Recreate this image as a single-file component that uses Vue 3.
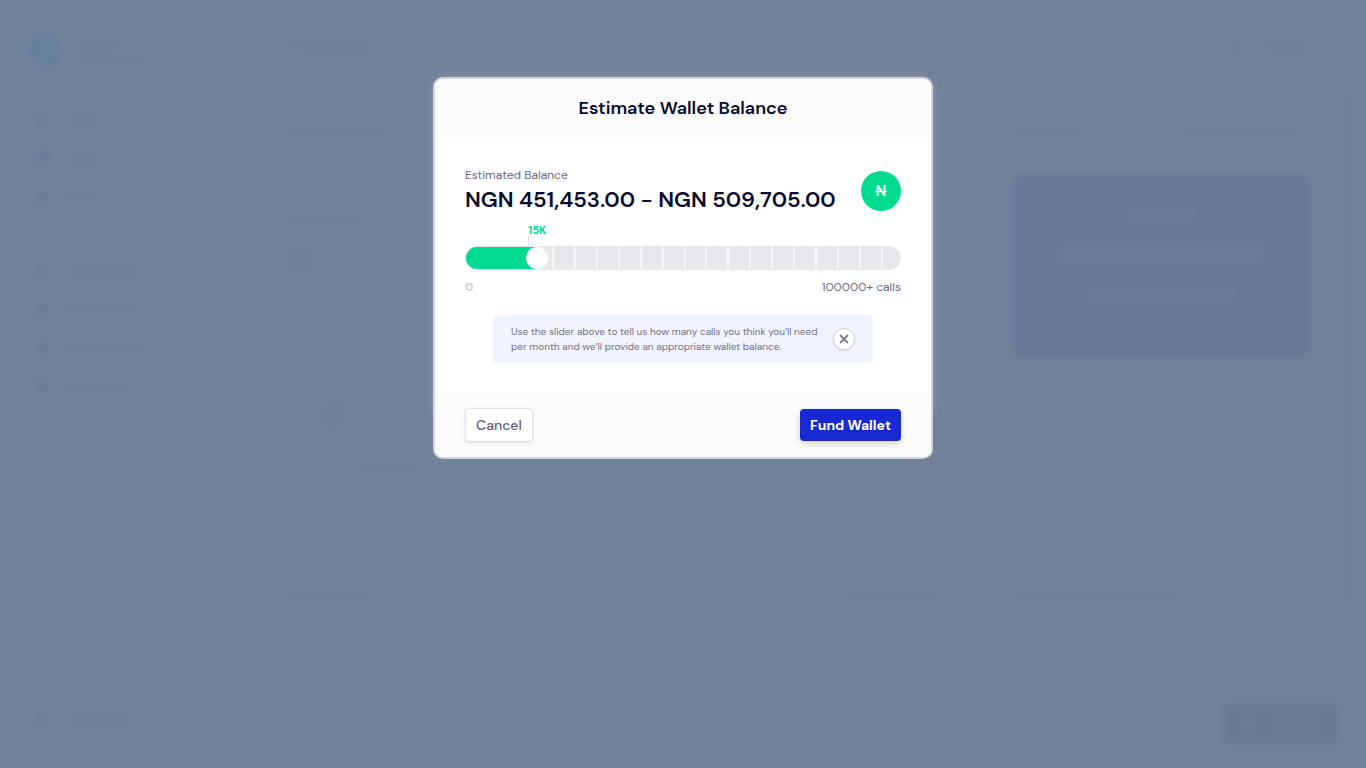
<script setup>
import { computed, ref } from 'vue'

const maxCalls = 100000
const calls = ref(14600)
const hintVisible = ref(true)

const ratio = computed(() => calls.value / maxCalls)
const callsLabel = computed(() => `${Math.round(calls.value / 1000)}K`)
const fillStyle = computed(() => ({
  width: `calc((100% - 22px) * ${ratio.value} + 11px)`,
}))
const markerStyle = computed(() => ({
  left: `calc((100% - 22px) * ${ratio.value} + 2px)`,
}))
</script>

<template>
  <div class="page">
    <div class="backdrop" aria-hidden="true">
      <div class="sidebar">
        <div class="profile">
          <i class="avatar"></i>
          <div class="profile-lines"><i class="bar w40"></i><i class="bar thin w70"></i></div>
        </div>
        <div class="nav">
          <div class="nav-row"><i class="dot"></i><i class="bar w40"></i></div>
          <div class="nav-row"><i class="dot active"></i><i class="bar w40"></i></div>
          <div class="nav-row"><i class="dot"></i><i class="bar w40"></i></div>
        </div>
        <div class="nav second">
          <i class="bar thin w50"></i>
          <div class="nav-row"><i class="dot"></i><i class="bar w80"></i></div>
          <div class="nav-row"><i class="dot"></i><i class="bar w80"></i></div>
          <div class="nav-row"><i class="dot"></i><i class="bar w80"></i></div>
          <div class="nav-row"><i class="dot"></i><i class="bar w70"></i></div>
        </div>
        <div class="nav-row last"><i class="dot"></i><i class="bar w70"></i></div>
      </div>

      <div class="main">
        <div class="row"><i class="bar w90"></i><i class="dot small end"></i><i class="bar w50"></i></div>
        <div class="columns">
          <div class="column">
            <i class="bar w100"></i>
            <div class="steps">
              <i class="bar w80"></i>
              <i class="ring"></i>
              <i class="bar thin w70 indent"></i>
              <i class="bar thin w70 indent far"></i>
              <i class="ring indent"></i>
              <i class="bar thin w70 deep"></i>
            </div>
            <div class="row bottom"><i class="bar w90"></i><i class="bar faint w100 end"></i></div>
          </div>
          <div class="column wallet">
            <div class="row inset"><i class="bar w70"></i><i class="bar w120 end"></i></div>
            <div class="balance">
              <i class="bar light w80"></i>
              <i class="bar bright w210"></i>
              <i class="bar light w160"></i>
            </div>
            <div class="row bottom"><i class="bar w170"></i></div>
          </div>
        </div>
      </div>
      <div class="scroll"></div>
      <div class="chat"><i class="dot pale"></i><i class="bar light w50"></i></div>
    </div>

    <div class="dialog" role="dialog" aria-modal="true" aria-labelledby="dialog-title">
      <header class="head"><h1 id="dialog-title">Estimate Wallet Balance</h1></header>

      <div class="body">
        <div class="estimate">
          <div>
            <p class="caption">Estimated Balance</p>
            <p class="amount">NGN 451,453.00 - NGN 509,705.00</p>
          </div>
          <span class="currency"><span class="naira">N</span></span>
        </div>

        <div class="slider">
          <div class="marker" :style="markerStyle">{{ callsLabel }}</div>
          <div class="ticks"><i v-for="n in 16" :key="n"></i></div>
          <div class="fill" :style="fillStyle"></div>
          <input
            v-model.number="calls"
            type="range"
            min="0"
            :max="maxCalls"
            step="100"
            aria-label="Calls per month"
          />
        </div>
        <div class="scale"><span class="zero">0</span><span>100000+ calls</span></div>

        <div v-if="hintVisible" class="hint">
          <p>Use the slider above to tell us how many calls you think you’ll need per month and we’ll provide an appropriate wallet balance.</p>
          <button class="close" type="button" aria-label="Dismiss" @click="hintVisible = false">
            <svg width="10" height="10" viewBox="0 0 10 10" fill="none" stroke="currentColor" stroke-width="1.8">
              <path d="M1 1l8 8M9 1L1 9" />
            </svg>
          </button>
        </div>
      </div>

      <footer class="foot">
        <button class="cancel" type="button">Cancel</button>
        <button class="fund" type="button">Fund Wallet</button>
      </footer>
    </div>
  </div>
</template>

<style>
body {
  margin: 0;
  background: #728299;
}
</style>

<style scoped>
* {
  box-sizing: border-box;
}
.page {
  position: relative;
  isolation: isolate;
  min-height: 100vh;
  overflow: hidden;
  padding: 77px 16px 40px;
  background: #728299;
  font-family: 'DM Sans', Inter, 'Liberation Sans', sans-serif;
}
h1,
p {
  margin: 0;
}

/* Blurred dashboard behind the dialog */
.backdrop {
  position: absolute;
  inset: 0;
  z-index: -2;
  display: flex;
  filter: blur(4px);
}
.bar {
  display: block;
  height: 12px;
  border-radius: 6px;
  background: #6f7f98;
}
.thin { height: 8px; }
.faint { background: #707f9a; }
.light { background: #6d7b97; }
.bright {
  height: 20px;
  background: #6f7d97;
}
.w40 { width: 40px; }
.w50 { width: 50px; }
.w70 { width: 70px; }
.w80 { width: 80px; }
.w90 { width: 90px; }
.w100 { width: 100px; }
.w120 { width: 120px; }
.w160 { width: 160px; }
.w170 { width: 170px; }
.w210 { width: 210px; }
.end { margin-left: auto; }
.indent { margin-left: 32px; }
.deep { margin-left: 70px; }
.sidebar {
  display: flex;
  flex-direction: column;
  width: 250px;
  padding: 20px 16px 38px;
}
.profile {
  display: flex;
  align-items: center;
  gap: 14px;
  height: 62px;
  padding: 0 13px;
  border-radius: 6px;
  background: #71819a;
}
.avatar {
  width: 34px;
  height: 34px;
  border: 10px solid #67809e;
  border-radius: 50%;
  background: #6c849d;
}
.profile-lines {
  display: grid;
  gap: 8px;
}
.nav { padding-top: 20px; }
.nav.second { padding-top: 22px; }
.nav.second > .bar { margin: 0 16px 7px; }
.nav-row {
  display: flex;
  align-items: center;
  gap: 14px;
  height: 38px;
  padding-left: 16px;
}
.nav-row.last {
  height: 20px;
  margin-top: auto;
}
.dot {
  width: 18px;
  height: 18px;
  border-radius: 50%;
  background: #6e7e97;
}
.dot.active { background: #6b7b9b; }
.dot.pale {
  width: 14px;
  height: 14px;
  background: #708098;
}
.dot.small {
  width: 14px;
  height: 14px;
  margin-right: 20px;
  background: #6b8099;
}
.main {
  display: flex;
  flex: 1;
  flex-direction: column;
  padding: 41px 56px 0 36px;
}
.row {
  display: flex;
  height: 12px;
}
.row.inset { padding-right: 10px; }
.columns {
  display: flex;
  flex: 1;
  gap: 72px;
  padding-top: 72px;
}
.column {
  display: flex;
  flex: 1;
  flex-direction: column;
}
.column.wallet { flex: 0 0 298px; }
.steps {
  display: grid;
  justify-items: start;
  gap: 20px;
  padding-top: 77px;
}
.steps .thin { margin-top: 14px; }
.steps .far { margin-top: 34px; }
.ring {
  width: 30px;
  height: 30px;
  border: 10px solid #6f7f99;
  border-radius: 50%;
}
.row.bottom {
  margin-top: auto;
  margin-bottom: 168px;
}
.balance {
  display: flex;
  flex-direction: column;
  align-items: center;
  gap: 24px;
  height: 182px;
  margin-top: 38px;
  padding-top: 34px;
  border-radius: 8px;
  background: #677796;
}
.scroll {
  position: absolute;
  top: 90px;
  right: 8px;
  bottom: 164px;
  width: 16px;
  border-radius: 8px;
  background: #708098;
}
.chat {
  position: absolute;
  right: 27px;
  bottom: 24px;
  display: flex;
  align-items: center;
  justify-content: center;
  gap: 16px;
  width: 116px;
  height: 40px;
  border-radius: 6px;
  background: #6a7993;
}

/* Dialog */
.dialog {
  position: relative;
  max-width: 500px;
  margin: 0 auto;
  border: 2px solid #cfd4de;
  border-radius: 10px;
  background: #fff;
}
.dialog::before {
  content: '';
  position: absolute;
  inset: 0 0 40px;
  z-index: -1;
  border-radius: 10px;
  box-shadow: 0 0 8px 2px rgba(255, 255, 255, 0.2);
}
.head {
  padding: 17px 30px;
  border-radius: 8px 8px 0 0;
  background: #fbfbfb;
  text-align: center;
}
.head h1 {
  color: #080a2e;
  font-size: 18px;
  font-weight: 600;
  line-height: 24px;
}
.body { padding: 30px; }
.estimate {
  display: flex;
  align-items: flex-start;
  justify-content: space-between;
}
.caption {
  color: #6b6984;
  font-size: 12px;
  line-height: 16px;
}
.amount {
  color: #080a2e;
  font-size: 22px;
  font-weight: 600;
  line-height: 34px;
  white-space: nowrap;
}
.currency {
  display: grid;
  place-items: center;
  width: 40px;
  height: 40px;
  margin-top: 4px;
  border-radius: 50%;
  background: #00dc8f;
  color: #fff;
  font-size: 15px;
  font-weight: 600;
  line-height: 20px;
}
.naira { position: relative; }
.naira::after {
  content: '';
  position: absolute;
  top: 10px;
  right: -1px;
  left: -1px;
  height: 1px;
  background: #fff;
}
.slider {
  position: relative;
  height: 24px;
  margin-top: 29px;
  border: 1px solid #e6e7eb;
  border-radius: 12px;
  background: #e7e8ec;
}
.marker {
  position: absolute;
  bottom: 22px;
  height: 23px;
  color: #00dc8f;
  font-size: 11px;
  font-weight: 800;
  line-height: 12px;
}
.marker::after {
  content: '';
  position: absolute;
  bottom: 0;
  left: 0;
  width: 1px;
  height: 11px;
  background: #e2e3e8;
}
.ticks {
  display: flex;
  justify-content: space-between;
  height: 100%;
  padding: 0 17px 0 86px;
}
.ticks i {
  width: 2px;
  background: rgba(255, 255, 255, 0.6);
}
.fill {
  position: absolute;
  inset: 0 auto 0 0;
  border-radius: 11px 0 0 11px;
  background: #00dc8f;
}
.slider input {
  position: absolute;
  inset: 0;
  width: 100%;
  height: 22px;
  margin: 0;
  appearance: none;
  background: transparent;
  cursor: pointer;
}
.slider input::-webkit-slider-thumb {
  width: 22px;
  height: 22px;
  appearance: none;
  border: 0;
  border-radius: 50%;
  background: #fff;
}
.scale {
  display: flex;
  justify-content: space-between;
  margin-top: 9px;
  color: #6b6984;
  font-size: 12px;
  line-height: 16px;
}
.zero {
  color: #cbd0dc;
  font-weight: 700;
}
.hint {
  display: flex;
  align-items: center;
  justify-content: space-between;
  gap: 14px;
  min-height: 48px;
  margin: 20px 28px 0;
  padding: 0 18px;
  border-radius: 4px;
  background: #f1f4fd;
}
.hint p {
  color: #73718a;
  font-size: 10px;
  line-height: 15px;
}
.close {
  display: grid;
  flex: none;
  place-items: center;
  width: 22px;
  height: 22px;
  padding: 0;
  border: 1px solid #d5d6dc;
  border-radius: 50%;
  background: #fff;
  box-shadow: 0 1px 2px rgba(0, 0, 0, 0.12);
  color: #777b90;
}
.foot {
  display: flex;
  align-items: center;
  justify-content: space-between;
  padding: 15px 30px;
  border-radius: 0 0 8px 8px;
  background: #fbfbfb;
}
.foot button {
  padding: 0 10px;
  border-radius: 4px;
  font-family: inherit;
  font-size: 14px;
}
.foot .cancel {
  height: 34px;
  border: 1px solid #e2e3e7;
  background: #fff;
  box-shadow: 0 1px 3px rgba(0, 0, 0, 0.1);
  color: #626075;
  font-weight: 500;
}
.foot .fund {
  height: 32px;
  border: 0;
  background: #1829d0;
  box-shadow: 0 3px 6px rgba(0, 0, 0, 0.14);
  color: #fff;
  font-weight: 700;
}
</style>
